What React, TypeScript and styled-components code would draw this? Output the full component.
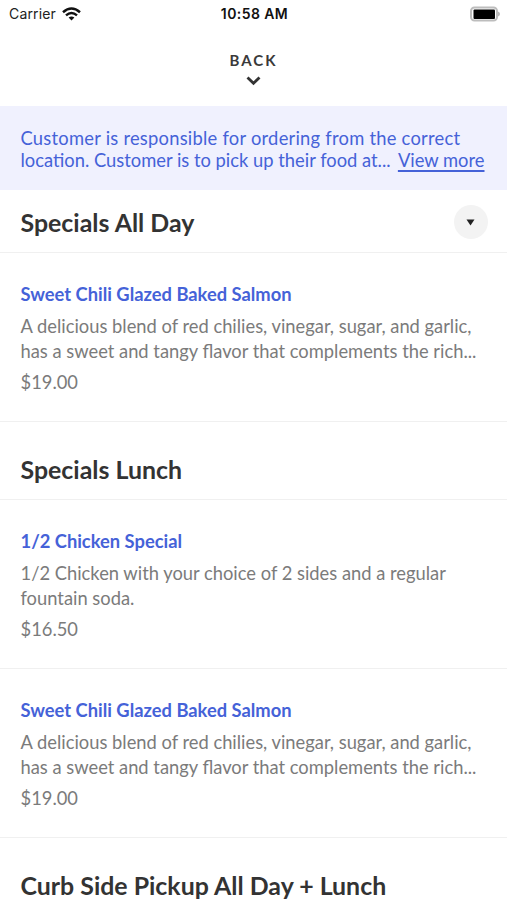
import React from "react";
import styled, { createGlobalStyle } from "styled-components";

const Global = createGlobalStyle`
  * { box-sizing: border-box; }
  body { margin: 0; background: #fff; overflow: hidden; font-family: Lato, sans-serif; color: #333; }
  p, h2, h3 { margin: 0; font-weight: 400; white-space: nowrap; }
`;
const Screen = styled.main`
  width: 507px; height: 900px; overflow: hidden; background: #fff;
`;
const StatusBar = styled.div`
  display: grid; grid-template-columns: 1fr auto 1fr; align-items: center;
  height: 28px; padding: 0 7px 0 9px;
  font: 14px/28px Inter, sans-serif; color: #222;
`;
const Carrier = styled.div`display: flex; align-items: center; gap: 6px; letter-spacing: 0.15px;`;
const Clock = styled.div`font-weight: 600; letter-spacing: 0.42px; color: #111;`;
const Power = styled.div`display: flex; justify-content: flex-end;`;
const Back = styled.button`
  display: flex; flex-direction: column; align-items: center; width: 100%; height: 78px;
  border: 0; padding: 22px 0 0; background: #fff; color: #3a3a3a;
  font: 700 15px/20px Lato, sans-serif; letter-spacing: 2px;
  svg { margin-top: 6px; }
`;
const Notice = styled.section`
  height: 84px; padding: 21px 22.5px 0 20.5px; background: #f0f1fe; color: #4562d8;
  font-size: 18.35px; line-height: 22px;
`;
const NoticeLine = styled.p<{ $track?: number }>`
  display: flex; justify-content: space-between; letter-spacing: ${(p) => p.$track ?? 0}px;
`;
const More = styled.a`text-decoration: underline; text-decoration-thickness: 1.5px; text-underline-offset: 3px;`;
const Heading = styled.header<{ $first?: boolean }>`
  display: flex; justify-content: space-between; align-items: center;
  height: ${(p) => (p.$first ? 63 : 78)}px;
  padding: ${(p) => (p.$first ? 2 : 17)}px 19.5px 0 20.5px;
  border-bottom: 1px solid #f0f0f0;
`;
const Title = styled.h2`
  && { font-size: 24.9px; line-height: 30px; font-weight: 700; }
`;
const Round = styled.button`
  display: grid; place-items: center; width: 34px; height: 34px; padding: 0; border: 0;
  border-radius: 50%; background: #f3f3f3;
`;
const Item = styled.article`
  height: 169px; padding: 29px 20.5px 0; border-bottom: 1px solid #f0f0f0;
  font-size: 18.33px; line-height: 24.5px; color: #7b7b7b;
`;
const Name = styled.h3`
  && { font-size: 18.33px; line-height: 24px; font-weight: 700; color: #4562d8; margin-bottom: 8px; }
`;
const Line = styled.p``;
const Price = styled.p`margin-top: 7px;`;

type Dish = { name: string; lines: string[]; price: string };
const salmon: Dish = {
  name: "Sweet Chili Glazed Baked Salmon",
  lines: ["A delicious blend of red chilies, vinegar, sugar, and garlic,", "has a sweet and tangy flavor that complements the rich..."],
  price: "$19.00",
};
const chicken: Dish = {
  name: "1/2 Chicken Special",
  lines: ["1/2 Chicken with your choice of 2 sides and a regular", "fountain soda."],
  price: "$16.50",
};
const MenuItem = ({ dish }: { dish: Dish }) => (
  <Item>
    <Name>{dish.name}</Name>
    {dish.lines.map((text) => <Line key={text}>{text}</Line>)}
    <Price>{dish.price}</Price>
  </Item>
);

export default function App() {
  return (
    <>
      <Global />
      <Screen>
        <StatusBar>
          <Carrier>Carrier
            <svg width="19" height="14" viewBox="0 0 19 14" fill="none" stroke="#111" strokeWidth="2.5">
              <path d="M1 5.2Q9.5-2.2 18 5.2M4 8.4Q9.5 3.7 15 8.4" /><path d="M9.5 13.5L6.6 10.6Q9.5 8.2 12.4 10.6Z" fill="#111" stroke="none" />
            </svg>
          </Carrier>
          <Clock>10:58 AM</Clock>
          <Power>
            <svg width="30" height="16" viewBox="0 0 30 16">
              <rect x="1" y="1.5" width="26" height="13" rx="3.5" fill="#fff" stroke="#bdbdbd" strokeWidth="2" />
              <rect x="3.5" y="3.5" width="21.5" height="9.5" rx="1" />
              <path d="M28 5.5v5q2-.8 2-2.5T28 5.5" fill="#b8b8b8" />
            </svg>
          </Power>
        </StatusBar>
        <Back>BACK
          <svg width="16" height="10" viewBox="0 0 16 10" fill="none" stroke="#333" strokeWidth="2.8"><path d="M1.5 1.5L7.5 7.3L13.5 1.5" /></svg>
        </Back>
        <Notice>
          <NoticeLine $track={0.24}>Customer is responsible for ordering from the correct</NoticeLine>
          <NoticeLine><span>location. Customer is to pick up their food at...</span><More>View more</More></NoticeLine>
        </Notice>
        <Heading $first><Title>Specials All Day</Title>
          <Round><svg width="9" height="7" viewBox="0 0 9 7"><path d="M.5 .5h8L4.5 6.5z" fill="#222" /></svg></Round>
        </Heading>
        <MenuItem dish={salmon} />
        <Heading><Title>Specials Lunch</Title></Heading>
        <MenuItem dish={chicken} />
        <MenuItem dish={salmon} />
        <Heading><Title>Curb Side Pickup All Day + Lunch</Title></Heading>
      </Screen>
    </>
  );
}
